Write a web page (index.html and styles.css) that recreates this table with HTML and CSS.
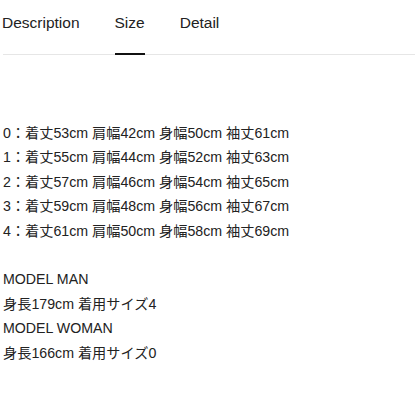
FILE: index.html
```html
<!DOCTYPE html>
<html lang="ja">
<head>
<meta charset="utf-8">
<link rel="stylesheet" href="styles.css">
</head>
<body>
<div class="page">
  <nav class="tabs">
    <span class="tab">Description</span>
    <span class="tab active">Size</span>
    <span class="tab">Detail</span>
  </nav>
  <div class="content">
    <p class="block">0：着丈53cm 肩幅42cm 身幅50cm 袖丈61cm<br>1：着丈55cm 肩幅44cm 身幅52cm 袖丈63cm<br>2：着丈57cm 肩幅46cm 身幅54cm 袖丈65cm<br>3：着丈59cm 肩幅48cm 身幅56cm 袖丈67cm<br>4：着丈61cm 肩幅50cm 身幅58cm 袖丈69cm</p>
    <p class="block">MODEL MAN<br>身長179cm 着用サイズ4<br>MODEL WOMAN<br>身長166cm 着用サイズ0</p>
  </div>
</div>
</body>
</html>
```

FILE: styles.css
```css
html, body {
  margin: 0;
  padding: 0;
  background: #fff;
}
body {
  font-family: "Liberation Sans", "Noto Sans CJK JP", sans-serif;
  color: #222;
}
.page {
  padding-left: 3px;
}
.tabs {
  display: flex;
  gap: 36px;
  border-bottom: 1px solid #e6e6e6;
  height: 55px;
  box-sizing: border-box;
  padding-top: 13px;
}
.tab {
  font-size: 15.5px;
  line-height: 20px;
  height: 42px;
  box-sizing: border-box;
  color: #222;
  margin-left: -1px;
}
.tab.active {
  border-bottom: 2px solid #111;
  margin-bottom: -1px;
}
.content {
  padding-top: 66px;
  font-size: 14.2px;
  line-height: 24.4px;
}
.block {
  margin: 0 0 24.4px;
}
```
